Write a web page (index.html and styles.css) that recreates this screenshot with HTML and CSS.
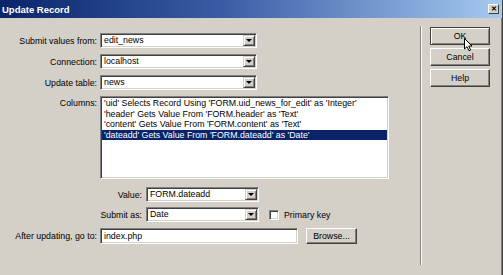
FILE: index.html
```html
<!DOCTYPE html>
<html>
  <head>
    <link rel="stylesheet" href="styles.css">
  </head>
  <body>
    <div class="dialog">
      <div class="titlebar">
        <span class="title">Update Record</span>
        <span class="close">&#x2715;</span>
      </div>
      <div class="content">
        <div class="form">
          <span class="lbl">Submit values from:</span>
          <div class="combo"><span class="val">edit_news</span><span class="arrow"></span></div>

          <span class="lbl">Connection:</span>
          <div class="combo"><span class="val">localhost</span><span class="arrow"></span></div>

          <span class="lbl">Update table:</span>
          <div class="combo"><span class="val">news</span><span class="arrow"></span></div>

          <span class="lbl lblTop">Columns:</span>
          <div class="listbox">
            <div class="item">'uid' Selects Record Using 'FORM.uid_news_for_edit' as 'Integer'</div>
            <div class="item">'header' Gets Value From 'FORM.header' as 'Text'</div>
            <div class="item">'content' Gets Value From 'FORM.content' as 'Text'</div>
            <div class="item selected">'dateadd' Gets Value From 'FORM.dateadd' as 'Date'</div>
          </div>

          <div class="subform">
            <span class="lbl">Value:</span>
            <div class="combo small"><span class="val">FORM.dateadd</span><span class="arrow"></span></div>
            <span></span>
            <span class="lbl">Submit as:</span>
            <div class="combo small"><span class="val">Date</span><span class="arrow"></span></div>
            <span class="check"><span class="box"></span>Primary key</span>
          </div>

          <span class="lbl">After updating, go to:</span>
          <div class="fileRow">
            <div class="textbox">index.php</div>
            <button class="btn browse">Browse...</button>
          </div>
        </div>
        <div class="actions">
          <button class="btn default">OK</button>
          <button class="btn">Cancel</button>
          <button class="btn">Help</button>
        </div>
      </div>
      <svg class="cursor" width="10" height="14" viewBox="0 0 10 14">
        <path d="M0.5 0.5 L0.5 11 L3 8.7 L5 12.8 L6.6 12 L4.7 8 L8 8 Z" fill="#fff" stroke="#000" stroke-width="1"/>
      </svg>
    </div>
  </body>
</html>
```

FILE: styles.css
```css
body{
  margin: 0;
  background-color: #d4d0c8;
  font-family: "Liberation Sans", Arial, sans-serif;
  font-size: 8.8px;
  color: #000;
  overflow: hidden;
}
.dialog{
  position: relative;
  width: 503px;
  height: 275px;
  box-sizing: border-box;
  border-right: 1px solid #404040;
}
.titlebar{
  height: 18px;
  display: flex;
  align-items: center;
  justify-content: space-between;
  padding: 0 3px 0 2px;
  background: linear-gradient(to right, #0a246a, #3a5ea6 45%, #a6caf0);
  color: #fff;
  font-weight: bold;
  font-size: 9.5px;
}
.close{
  width: 11px;
  height: 10px;
  box-sizing: border-box;
  display: flex;
  align-items: center;
  justify-content: center;
  background-color: #d4d0c8;
  border: 1px solid;
  border-color: #fff #404040 #404040 #fff;
  color: #000;
  font-size: 7px;
  font-weight: bold;
}
.content{
  display: flex;
  height: 257px;
  border-right: 1px solid #808080;
}
.form{
  width: 420px;
  box-sizing: border-box;
  display: grid;
  grid-template-columns: 97px auto;
  column-gap: 3px;
  row-gap: 6px;
  align-content: start;
  padding-top: 15px;
}
.lbl{
  text-align: right;
  align-self: center;
  white-space: nowrap;
}
.lblTop{
  align-self: start;
  padding-top: 2px;
}
.combo{
  width: 157px;
  height: 15px;
  box-sizing: border-box;
  display: flex;
  padding: 1px;
  background-color: #fff;
  border: 1px solid;
  border-color: #808080 #fff #fff #808080;
  box-shadow: inset 1px 1px 0 #404040, inset -1px -1px 0 #d4d0c8;
}
.combo.small{
  width: 113px;
}
.val{
  flex: 1;
  padding-left: 2px;
  line-height: 11px;
  white-space: nowrap;
}
.arrow{
  width: 12px;
  box-sizing: border-box;
  display: flex;
  align-items: center;
  justify-content: center;
  background-color: #d4d0c8;
  border: 1px solid;
  border-color: #d4d0c8 #404040 #404040 #d4d0c8;
  box-shadow: inset 1px 1px 0 #fff, inset -1px -1px 0 #808080;
}
.arrow::after{
  content: "";
  border-left: 3px solid transparent;
  border-right: 3px solid transparent;
  border-top: 3px solid #000;
}
.listbox{
  width: 289px;
  height: 83px;
  box-sizing: border-box;
  padding: 1px;
  background-color: #fff;
  border: 1px solid;
  border-color: #808080 #fff #fff #808080;
  box-shadow: inset 1px 1px 0 #404040, inset -1px -1px 0 #d4d0c8;
}
.item{
  padding-left: 2px;
  line-height: 10.5px;
  white-space: nowrap;
}
.item.selected{
  background-color: #0a246a;
  color: #fff;
}
.subform{
  grid-column: 2;
  display: grid;
  grid-template-columns: 42px 113px auto;
  column-gap: 4px;
  row-gap: 5px;
  margin-top: 2px;
  align-items: center;
}
.check{
  display: flex;
  align-items: center;
  gap: 5px;
  margin-left: 6px;
  white-space: nowrap;
}
.box{
  width: 10px;
  height: 10px;
  box-sizing: border-box;
  background-color: #fff;
  border: 1px solid;
  border-color: #808080 #fff #fff #808080;
  box-shadow: inset 1px 1px 0 #404040, inset -1px -1px 0 #d4d0c8;
}
.fileRow{
  display: flex;
  align-items: center;
  gap: 8px;
}
.textbox{
  width: 198px;
  height: 16px;
  box-sizing: border-box;
  padding: 1px 0 0 3px;
  line-height: 12px;
  background-color: #fff;
  border: 1px solid;
  border-color: #808080 #fff #fff #808080;
  box-shadow: inset 1px 1px 0 #404040, inset -1px -1px 0 #d4d0c8;
}
.btn{
  width: 60px;
  height: 18px;
  box-sizing: border-box;
  padding: 0;
  font: inherit;
  color: #000;
  background-color: #d4d0c8;
  border: 1px solid;
  border-color: #fff #404040 #404040 #fff;
  box-shadow: inset -1px -1px 0 #808080;
}
.btn.browse{
  width: 51px;
  height: 16px;
}
.btn.default{
  border-color: #404040;
  box-shadow: inset 1px 1px 0 #fff, inset -1px -1px 0 #808080;
}
.actions{
  display: flex;
  flex-direction: column;
  gap: 3px;
  margin: 8px 0 10px 0;
  padding: 1px 0 0 9px;
  border-left: 1px solid #808080;
  box-shadow: inset 1px 0 0 #fff;
}
.cursor{
  position: absolute;
  left: 464px;
  top: 38px;
}
```
